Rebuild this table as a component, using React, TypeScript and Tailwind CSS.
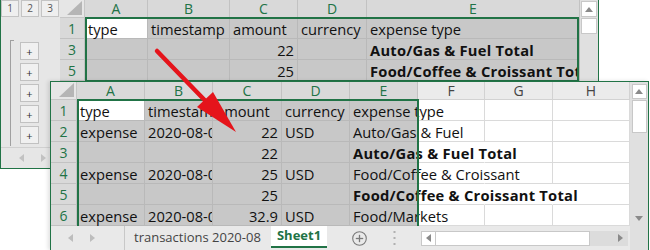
import React from "react";

type CellDef = {
  t?: string;
  bold?: boolean;
  right?: boolean;
  white?: boolean;
  spill?: boolean;
};

function Tri({ d, c = "#7b7b7b" }: { d: "l" | "r" | "u" | "d"; c?: string }) {
  if (d === "u")
    return (
      <svg width="8" height="5" viewBox="0 0 8 5">
        <polygon points="0,5 8,5 4,0" fill={c} />
      </svg>
    );
  if (d === "d")
    return (
      <svg width="8" height="5" viewBox="0 0 8 5">
        <polygon points="0,0 8,0 4,5" fill={c} />
      </svg>
    );
  if (d === "l")
    return (
      <svg width="5" height="8" viewBox="0 0 5 8">
        <polygon points="5,0 5,8 0,4" fill={c} />
      </svg>
    );
  return (
    <svg width="5" height="8" viewBox="0 0 5 8">
      <polygon points="0,0 0,8 5,4" fill={c} />
    </svg>
  );
}

function Corner({ w }: { w: string }) {
  return (
    <div
      className={`${w} h-full shrink-0 bg-[#e6e6e6] border-r border-b border-[#c6c6c6] flex items-end justify-end pr-[2px] pb-[2px]`}
    >
      <svg width="15" height="14" viewBox="0 0 15 14">
        <polygon points="15,0 15,14 0,14" fill="#b5b5b5" />
      </svg>
    </div>
  );
}

function ColHead({ w, l, sel }: { w: string; l: string; sel: boolean }) {
  return (
    <div
      className={`${w} h-full shrink-0 flex items-center justify-center text-[14px] border-r border-b ${
        sel
          ? "bg-[#d9d9d9] text-[#217346] border-[#c2c2c2]"
          : "bg-[#ebebeb] text-[#444444] border-[#d2d2d2]"
      }`}
    >
      {l}
    </div>
  );
}

function RowHead({ w, n }: { w: string; n: string }) {
  return (
    <div
      className={`${w} h-[21px] shrink-0 bg-[#d9d9d9] border-r border-b border-[#c2c2c2] text-[#217346] text-[14px] flex items-center justify-center`}
    >
      {n}
    </div>
  );
}

function Cell({
  w,
  d,
  sel,
  hideR,
}: {
  w: string;
  d: CellDef;
  sel: boolean;
  hideR?: boolean;
}) {
  const bg = d.white ? "bg-white" : sel ? "bg-[#c8c8c8]" : "";
  const line = sel ? "border-[#b9b9b9]" : "border-[#dadada]";
  return (
    <div
      className={`${w} h-[21px] shrink-0 border-r border-b ${line} ${
        hideR ? "border-r-transparent" : ""
      } ${bg} px-[3px] pt-[1px] leading-[20px] whitespace-nowrap text-[14.7px] text-[#111111] ${
        d.spill ? "overflow-visible" : "overflow-x-clip"
      } ${d.right ? "text-right" : ""} ${d.bold ? "font-bold tracking-[0.25px]" : ""}`}
    >
      {d.t}
    </div>
  );
}

function OutlinePanel() {
  return (
    <div className="w-[59px] shrink-0 bg-[#e6e6e6] flex flex-col">
      <div className="flex h-[18px] gap-[2px]">
        {["1", "2", "3"].map((n) => (
          <div
            key={n}
            className="w-[18px] h-[17px] border border-[#c4c4c4] bg-[#efefef] text-[10px] text-[#555555] flex items-center justify-center"
          >
            {n}
          </div>
        ))}
      </div>
      <div className="flex">
        <div className="ml-[9px] mt-[22px] w-[4px] h-[106px] border-l border-t border-[#a0a0a0]" />
        <div className="flex flex-col gap-[3px] ml-[6px] mt-[24px]">
          {[0, 1, 2, 3, 4].map((i) => (
            <div
              key={i}
              className="w-[19px] h-[18px] border border-[#c1c1c1] bg-[#f0f0f0] text-[11px] leading-none text-[#333333] flex items-center justify-center"
            >
              +
            </div>
          ))}
        </div>
      </div>
    </div>
  );
}

const BW = ["w-[63px]", "w-[82px]", "w-[68px]", "w-[69px]", "w-[213px]"];
const BROWS: { n: string; c: CellDef[] }[] = [
  {
    n: "1",
    c: [
      { t: "type", white: true },
      { t: "timestamp" },
      { t: "amount" },
      { t: "currency" },
      { t: "expense type" },
    ],
  },
  {
    n: "3",
    c: [{}, {}, { t: "22", right: true }, {}, { t: "Auto/Gas & Fuel Total", bold: true }],
  },
  {
    n: "5",
    c: [
      {},
      {},
      { t: "25", right: true },
      {},
      { t: "Food/Coffee & Croissant Total", bold: true },
    ],
  },
];

function BackWindow() {
  return (
    <div className="absolute left-0 top-0 w-[599px] h-[169px] border-l border-r border-b border-[#217346] bg-[#e6e6e6] flex flex-col">
      <div className="flex h-[147px] overflow-hidden">
        <OutlinePanel />
        <div className="relative w-[520px] shrink-0 flex flex-col bg-white">
          <div className="flex h-[18px]">
            <Corner w="w-[25px]" />
            {["A", "B", "C", "D", "E"].map((l, i) => (
              <ColHead key={l} w={BW[i]} l={l} sel />
            ))}
          </div>
          {BROWS.map((r) => (
            <div key={r.n} className="flex">
              <RowHead w="w-[25px]" n={r.n} />
              {r.c.map((d, i) => (
                <Cell key={i} w={BW[i]} d={d} sel />
              ))}
            </div>
          ))}
          <div className="absolute left-[25px] top-[17px] w-[494px] h-[65px] border-2 border-[#217346]" />
        </div>
        <div className="w-[18px] shrink-0 bg-[#e0e0e0] flex flex-col items-center pt-[1px] gap-[1px]">
          <div className="w-[16px] h-[16px] bg-white border border-[#c8c8c8] flex items-center justify-center">
            <Tri d="u" c="#8a8a8a" />
          </div>
          <div className="w-[16px] h-[16px] bg-white border border-[#c8c8c8]" />
        </div>
      </div>
      <div className="h-[21px] flex items-center bg-[#e6e6e6] border-t border-[#d0d0d0] pl-[18px] gap-[17px]">
        <Tri d="l" c="#c2c2c2" />
        <Tri d="r" c="#c2c2c2" />
      </div>
    </div>
  );
}

const FW = [
  "w-[68px]",
  "w-[68px]",
  "w-[69px]",
  "w-[68px]",
  "w-[68px]",
  "w-[67px]",
  "w-[68px]",
  "w-[77px]",
];

const FROWS: { n: string; c: CellDef[]; hide: number[] }[] = [
  {
    n: "1",
    c: [
      { t: "type", white: true },
      { t: "timestamp" },
      { t: "amount" },
      { t: "currency" },
      { t: "expense type", spill: true },
    ],
    hide: [],
  },
  {
    n: "2",
    c: [
      { t: "expense" },
      { t: "2020-08-03" },
      { t: "22", right: true },
      { t: "USD" },
      { t: "Auto/Gas & Fuel", spill: true },
    ],
    hide: [],
  },
  {
    n: "3",
    c: [{}, {}, { t: "22", right: true }, {}, { t: "Auto/Gas & Fuel Total", bold: true, spill: true }],
    hide: [5],
  },
  {
    n: "4",
    c: [
      { t: "expense" },
      { t: "2020-08-05" },
      { t: "25", right: true },
      { t: "USD" },
      { t: "Food/Coffee & Croissant", spill: true },
    ],
    hide: [5],
  },
  {
    n: "5",
    c: [
      {},
      {},
      { t: "25", right: true },
      {},
      { t: "Food/Coffee & Croissant Total", bold: true, spill: true },
    ],
    hide: [5, 6],
  },
  {
    n: "6",
    c: [
      { t: "expense" },
      { t: "2020-08-07" },
      { t: "32.9", right: true },
      { t: "USD" },
      { t: "Food/Markets", spill: true },
    ],
    hide: [],
  },
];

function FrontWindow() {
  return (
    <div className="absolute left-[50px] top-[81px] w-[599px] h-[169px] border-l border-t border-r border-[#217346] bg-white flex flex-col shadow-[-2px_0_4px_rgba(0,0,0,0.12)]">
      <div className="flex h-[144px]">
        <div className="relative w-[579px] shrink-0 overflow-hidden flex flex-col">
          <div className="flex h-[18px]">
            <Corner w="w-[26px]" />
            {["A", "B", "C", "D", "E", "F", "G", "H"].map((l, i) => (
              <ColHead key={l} w={FW[i]} l={l} sel={i < 5} />
            ))}
          </div>
          {FROWS.map((r) => (
            <div key={r.n} className="flex">
              <RowHead w="w-[26px]" n={r.n} />
              {[0, 1, 2, 3, 4, 5, 6, 7].map((i) => (
                <Cell
                  key={i}
                  w={FW[i]}
                  d={r.c[i] || {}}
                  sel={i < 5}
                  hideR={r.hide.includes(i)}
                />
              ))}
            </div>
          ))}
          <div className="absolute left-[26px] top-[17px] w-[342px] h-[140px] border-2 border-[#217346]" />
        </div>
        <div className="w-[18px] shrink-0 bg-[#e0e0e0] flex flex-col items-center pt-[2px]">
          <div className="w-[15px] h-[15px] bg-white border border-[#c8c8c8] flex items-center justify-center">
            <Tri d="u" c="#8a8a8a" />
          </div>
          <div className="mt-[1px] w-[15px] h-[33px] bg-white border border-[#c8c8c8]" />
          <div className="mt-auto mb-[1px] w-[15px] h-[14px] flex items-center justify-center">
            <Tri d="d" c="#8a8a8a" />
          </div>
        </div>
      </div>
      <div className="h-[24px] flex bg-[#e9e9e9] text-[13px] text-[#444444]">
        <div className="w-[74px] shrink-0 flex items-center pl-[17px] gap-[17px] border-r border-[#c8c8c8]">
          <Tri d="l" c="#bdbdbd" />
          <Tri d="r" c="#bdbdbd" />
        </div>
        <div className="w-[146px] shrink-0 pl-[9px] flex items-center whitespace-nowrap">
          transactions 2020-08
        </div>
        <div className="w-[56px] shrink-0 bg-white flex items-center justify-center font-bold text-[#217346] border-b-2 border-[#217346] h-[22px]">
          Sheet1
        </div>
        <div className="w-[25px] shrink-0" />
        <div className="w-[15px] shrink-0 flex items-center">
          <svg width="15" height="15" viewBox="0 0 15 15">
            <circle cx="7.5" cy="7.5" r="6.8" fill="none" stroke="#7a7a7a" strokeWidth="1.1" />
            <line x1="7.5" y1="3.8" x2="7.5" y2="11.2" stroke="#7a7a7a" strokeWidth="1.3" />
            <line x1="3.8" y1="7.5" x2="11.2" y2="7.5" stroke="#7a7a7a" strokeWidth="1.3" />
          </svg>
        </div>
        <div className="w-[54px] shrink-0 flex items-center justify-center">
          <svg width="3" height="14" viewBox="0 0 3 14">
            <rect x="0.5" y="0" width="2" height="2" fill="#b0b0b0" />
            <rect x="0.5" y="6" width="2" height="2" fill="#b0b0b0" />
            <rect x="0.5" y="12" width="2" height="2" fill="#b0b0b0" />
          </svg>
        </div>
        <div className="w-[209px] shrink-0 flex items-center">
          <div className="w-[15px] h-[15px] shrink-0 bg-white border border-[#c8c8c8] flex items-center justify-center">
            <Tri d="l" c="#8a8a8a" />
          </div>
          <div className="w-[154px] h-[15px] shrink-0 bg-white border-y border-r border-[#c8c8c8]" />
          <div className="w-[22px] h-[15px] shrink-0 bg-[#dcdcdc]" />
          <div className="w-[16px] h-[15px] shrink-0 bg-[#dcdcdc] flex items-center justify-center">
            <Tri d="r" c="#8a8a8a" />
          </div>
        </div>
        <div className="w-[18px] shrink-0 bg-[#e0e0e0]" />
      </div>
    </div>
  );
}

export default function App() {
  return (
    <div className="relative w-[650px] h-[250px] overflow-hidden bg-white font-['Open_Sans',sans-serif]">
      <BackWindow />
      <FrontWindow />
      <svg
        className="absolute left-0 top-0 pointer-events-none"
        width="650"
        height="250"
        viewBox="0 0 650 250"
      >
        <line x1="157" y1="51" x2="222" y2="118" stroke="#e5141b" strokeWidth="4.5" strokeLinecap="round" />
        <polygon points="236,132 197,107 213,92" fill="#e5141b" />
      </svg>
    </div>
  );
}
